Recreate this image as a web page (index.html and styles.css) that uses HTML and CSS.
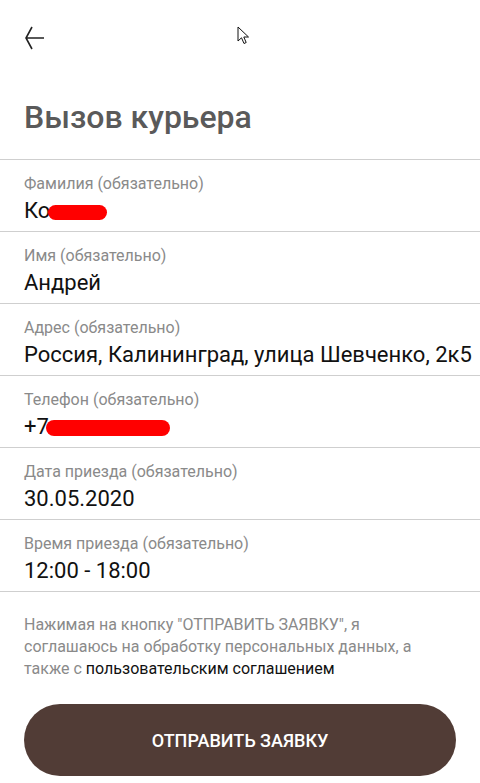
FILE: index.html
```html
<!DOCTYPE html>
<html lang="ru">
<head>
<meta charset="utf-8">
<link rel="stylesheet" href="styles.css">
</head>
<body>
<div class="page">
  <header class="topbar">
    <button class="back" aria-label="Назад">
      <svg width="24" height="26" viewBox="0 0 24 26"><path d="M8 1 L2 12 L8 23 M2 12 H20" fill="none" stroke="#222" stroke-width="1.6" stroke-linejoin="miter"/></svg>
    </button>
  </header>
  <h1 class="title">Вызов курьера</h1>
  <div class="form">
    <div class="row">
      <div class="label">Фамилия (обязательно)</div>
      <div class="value">Ко<span class="redact r1"></span></div>
    </div>
    <div class="row">
      <div class="label">Имя (обязательно)</div>
      <div class="value">Андрей</div>
    </div>
    <div class="row">
      <div class="label">Адрес (обязательно)</div>
      <div class="value">Россия, Калининград, улица Шевченко, 2к5</div>
    </div>
    <div class="row">
      <div class="label">Телефон (обязательно)</div>
      <div class="value">+7<span class="redact r2"></span></div>
    </div>
    <div class="row">
      <div class="label">Дата приезда (обязательно)</div>
      <div class="value">30.05.2020</div>
    </div>
    <div class="row">
      <div class="label">Время приезда (обязательно)</div>
      <div class="value">12:00 - 18:00</div>
    </div>
  </div>
  <p class="note">Нажимая на кнопку "ОТПРАВИТЬ ЗАЯВКУ", я соглашаюсь на обработку персональных данных, а также с <a class="link">пользовательским соглашением</a></p>
  <div class="actions"><button class="submit">ОТПРАВИТЬ ЗАЯВКУ</button></div>
  <svg class="cursor" width="14" height="20" viewBox="0 0 14 20"><path d="M1 1 L1 15 L4.5 11.8 L7 17.5 L9.2 16.5 L6.8 11 L11.5 11 Z" fill="#fff" stroke="#111" stroke-width="1"/></svg>
</div>
</body>
</html>
```
FILE: styles.css
```css
* { box-sizing: border-box; }
html, body { margin: 0; padding: 0; background: #fff; }
body { font-family: Roboto, "Noto Sans", Arial, sans-serif; color: #111; }
.page { position: relative; width: 480px; height: 783px; overflow: hidden; }
.topbar { height: 78px; display: flex; align-items: center; padding-left: 24px; }
.back { border: 0; background: none; padding: 0; margin: 0; width: 24px; height: 26px; display: block; cursor: pointer; }
.back svg { display: block; }
.title { margin: 0; padding: 19px 24px 0 24px; height: 81px; font-size: 32px; font-weight: 500; color: #5a5a5a; line-height: 40px; letter-spacing: 0; }
.form { border-top: 1px solid #cfcfcf; }
.row { height: 72px; border-bottom: 1px solid #cfcfcf; padding: 14px 24px 0 24px; }
.label { font-size: 16px; line-height: 20px; color: #8a8a8a; }
.value { margin-top: 3px; font-size: 22px; line-height: 28px; color: #111; white-space: nowrap; display: flex; align-items: center; }
.redact { display: inline-block; background: #ff0000; border-radius: 8px; }
.r1 { width: 59px; height: 15px; margin-left: -2px; margin-top: 3px; }
.r2 { width: 124px; height: 16px; margin-left: -3px; margin-top: 2px; }
.note { margin: 22px 24px 0 24px; font-size: 16px; line-height: 22px; color: #8a8a8a; }
.link { color: #111; text-decoration: none; }
.actions { padding: 24px 24px 0 24px; }
.submit { width: 100%; height: 72px; border: 0; border-radius: 36px; background: #513c36; color: #fff; font-family: Roboto, Arial, sans-serif; font-size: 18px; font-weight: 500; letter-spacing: 0; cursor: pointer; }
.cursor { position: absolute; left: 237px; top: 26px; }
```
